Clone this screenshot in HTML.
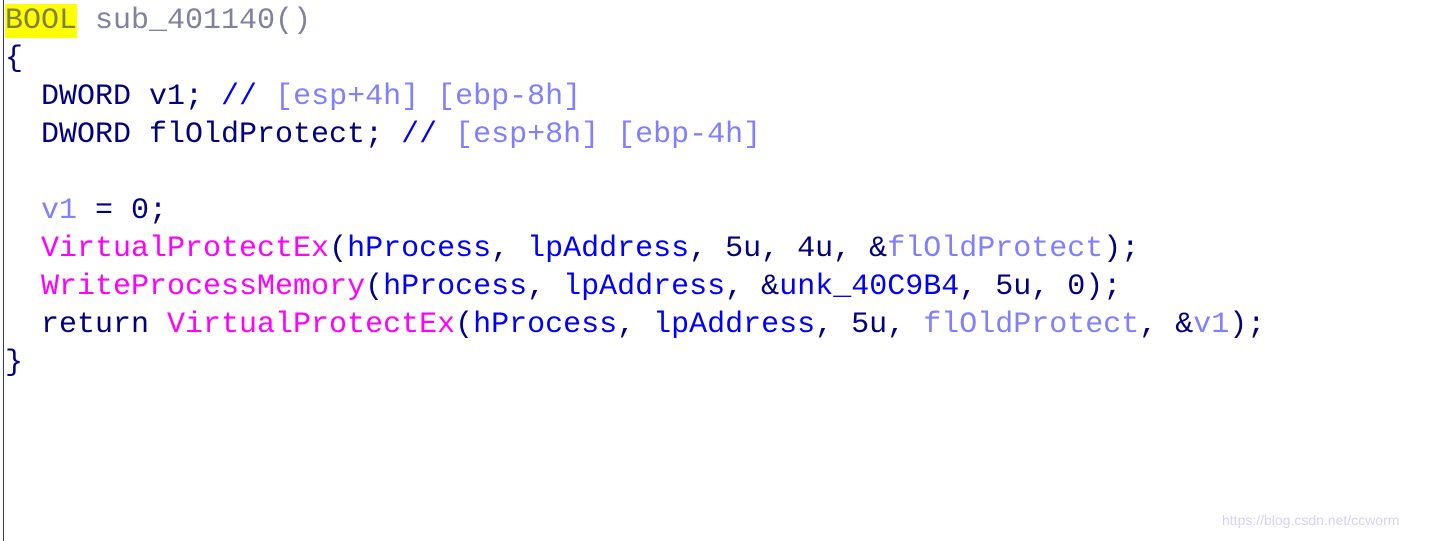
<!DOCTYPE html>
<html><head><style>
html,body{margin:0;padding:0;background:#fff;width:1430px;height:541px;overflow:hidden}
.b{position:absolute;left:3px;top:0;width:1px;height:541px;background:#3030c0}
pre{position:absolute;left:5px;top:2px;margin:0;font-family:"Liberation Mono",monospace;font-size:30px;line-height:38px;color:#000080;letter-spacing:0}
.h{background:#ffff00;color:#808040}
.g{color:#8080a0}
.c{color:#0000ff}
.l{color:#8080ff}
.f{color:#ff00ff}
.wm{position:absolute;left:1222px;top:512px;font-family:"Liberation Sans",sans-serif;font-size:14px;color:#d8d0f8}
</style></head><body>
<div class="b"></div>
<pre><span class="h">BOOL</span> <span class="g">sub_401140()</span>
{
  DWORD v1; <span class="c">//</span> <span class="l">[esp+4h] [ebp-8h]</span>
  DWORD flOldProtect; <span class="c">//</span> <span class="l">[esp+8h] [ebp-4h]</span>

  <span class="l">v1</span> = 0;
  <span class="f">VirtualProtectEx</span>(<span class="c">hProcess</span>, <span class="c">lpAddress</span>, 5u, 4u, &amp;<span class="l">flOldProtect</span>);
  <span class="f">WriteProcessMemory</span>(<span class="c">hProcess</span>, <span class="c">lpAddress</span>, &amp;<span class="c">unk_40C9B4</span>, 5u, 0);
  return <span class="f">VirtualProtectEx</span>(<span class="c">hProcess</span>, <span class="c">lpAddress</span>, 5u, <span class="l">flOldProtect</span>, &amp;<span class="l">v1</span>);
}</pre>
<div class="wm">https://blog.csdn.net/ccworm</div>
</body></html>
